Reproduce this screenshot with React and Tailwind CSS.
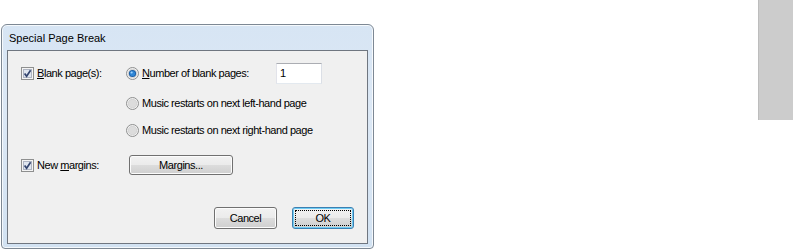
import React from 'react'

const CheckBox = () => (
  <svg width="13" height="13" viewBox="0 0 13 13" className="shrink-0">
    <rect x="0.5" y="0.5" width="12" height="12" fill="#f4f4f4" stroke="#8e8f8f" />
    <rect x="2.5" y="2.5" width="8" height="8" fill="#dfe5ef" stroke="#aeb4c2" />
    <path d="M3.6 6.4 L5.6 9.2 L9.6 3.2" stroke="#33446e" strokeWidth="1.7" fill="none" />
  </svg>
)

const Radio = ({ checked }) => (
  <svg width="13" height="13" viewBox="0 0 13 13" className="shrink-0">
    <circle cx="6.5" cy="6.5" r="6" fill="#f2f2f2" stroke="#8e8f8f" />
    <circle cx="6.5" cy="6.5" r="4.3" fill="#dcdcdc" stroke="#c8c8c8" strokeWidth="0.6" />
    {checked && (
      <>
        <circle cx="6.5" cy="6.5" r="3.6" fill="#1a5fa8" />
        <circle cx="6.5" cy="6.5" r="2.6" fill="#2f86d6" />
        <circle cx="5.6" cy="5.5" r="1.1" fill="#9fd3ff" />
      </>
    )}
  </svg>
)

const grayBtn =
  'border border-[#707070] rounded-[3px] bg-[linear-gradient(to_bottom,#f2f2f2_0%,#ebebeb_50%,#dddddd_50%,#cfcfcf_100%)] shadow-[inset_0_0_0_1px_#fcfcfc] flex items-center justify-center'

export default function App() {
  return (
    <div className="w-[793px] h-[250px] bg-white flex font-['Liberation_Sans',Arial,sans-serif] text-black">
      <div className="ml-[1px] mt-[24px] w-[373px] h-[225px] border border-[#7d8894] rounded-t-[6px] rounded-b-[4px] bg-[linear-gradient(to_bottom,#d7e5f4,#dce8f5_40%,#d2e2f2)] shadow-[inset_0_0_0_1px_rgba(255,255,255,0.75)] flex flex-col">
        <div className="h-[25px] pl-[7px] flex items-center text-[11px] leading-none pt-[1px]">
          Special Page Break
        </div>
        <div className="mx-[5px] h-[194px] border border-[#6f7680] bg-[#f0f0f0] flex flex-col text-[11px] tracking-[-0.45px] leading-[13px]">
          <div className="mt-[12px] h-[21px] pl-[13px] flex items-center">
            <div className="w-[105px] flex items-center gap-[3px]">
              <CheckBox />
              <span><span className="underline underline-offset-[1px]">B</span>lank page(s):</span>
            </div>
            <div className="w-[150px] flex items-center gap-[3px]">
              <Radio checked />
              <span><span className="underline underline-offset-[1px]">N</span>umber of blank pages:</span>
            </div>
            <div className="w-[46px] h-[21px] bg-white border border-[#abadb3] border-l-[#e2e3ea] border-r-[#dbdfe6] border-b-[#e3e9ef] pl-[3px] flex items-center">
              1
            </div>
          </div>
          <div className="mt-[13px] pl-[118px] flex items-center gap-[3px]">
            <Radio />
            <span>Music restarts on next left-hand page</span>
          </div>
          <div className="mt-[14px] pl-[118px] flex items-center gap-[3px]">
            <Radio />
            <span>Music restarts on next right-hand page</span>
          </div>
          <div className="mt-[18px] pl-[13px] flex items-center">
            <div className="w-[108px] flex items-center gap-[3px]">
              <CheckBox />
              <span>New <span className="underline underline-offset-[1px]">m</span>argins:</span>
            </div>
            <div className={`${grayBtn} w-[104px] h-[20px]`}>
              <span>Mar<span className="underline underline-offset-[1px]">g</span>ins...</span>
            </div>
          </div>
          <div className="mt-[32px] pr-[13px] flex justify-end gap-[15px]">
            <div className={`${grayBtn} w-[63px] h-[22px]`}>Cancel</div>
            <div className="w-[62px] h-[22px] border border-[#3c7fb1] rounded-[3px] bg-[linear-gradient(to_bottom,#f2f2f2_0%,#ebebeb_50%,#dddddd_50%,#cfcfcf_100%)] shadow-[inset_0_0_0_1px_#6fcdf5] p-[2px] flex">
              <div className="flex-1 border border-dotted border-black flex items-center justify-center">OK</div>
            </div>
          </div>
        </div>
      </div>
      <div className="flex-1" />
      <div className="w-[35px] h-[120px] bg-[#cccccc] border-l border-[#bdbdbd]" />
    </div>
  )
}
